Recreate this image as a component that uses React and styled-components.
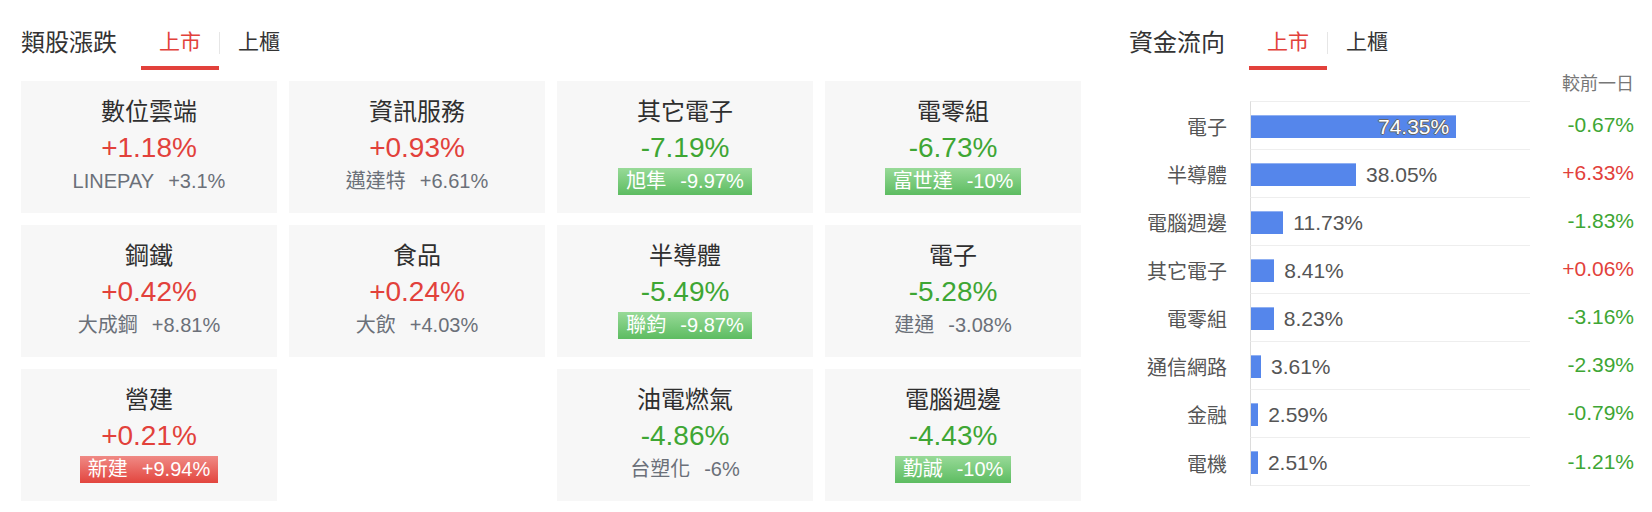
import React from "react";
import styled, { createGlobalStyle } from "styled-components";

const RED = "#e2413b";
const GREEN = "#3ea634";

const GlobalStyle = createGlobalStyle`
  html, body { margin: 0; padding: 0; background: #fff; }
  body {
    font-family: "Liberation Sans", "Noto Sans CJK TC", sans-serif;
    color: #333;
  }
`;

const Page = styled.div`
  display: flex;
  gap: 48px;
  width: 1652px;
  height: 512px;
  box-sizing: border-box;
  padding: 0 18px 0 21px;
`;

const LeftSection = styled.section`
  width: 1060px;
  flex: none;
`;

const RightSection = styled.section`
  flex: 1;
  min-width: 0;
`;

const Header = styled.div`
  display: flex;
  height: 70px;
`;

const Title = styled.h2`
  margin: 31px 24px 0 0;
  font-size: 24px;
  line-height: 24px;
  font-weight: 400;
  color: #333;
  white-space: nowrap;
`;

const Tabs = styled.div`
  display: flex;
`;

const Tab = styled.div`
  box-sizing: border-box;
  width: 78px;
  height: 70px;
  padding-top: 31px;
  text-align: center;
  font-size: 21px;
  line-height: 21px;
  color: ${(p) => (p.$active ? RED : "#333")};
  border-bottom: 4px solid ${(p) => (p.$active ? RED : "transparent")};
  cursor: pointer;
`;

const TabDivider = styled.div`
  width: 1px;
  height: 22px;
  margin-top: 32px;
  background: #e6e6e6;
`;

const CardArea = styled.div`
  display: flex;
  gap: 12px;
  margin-top: 11px;
`;

const CardGroup = styled.div`
  display: grid;
  grid-template-columns: repeat(2, 256px);
  grid-auto-rows: 132px;
  gap: 12px;
`;

const Card = styled.div`
  box-sizing: border-box;
  background: #f7f7f7;
  display: flex;
  flex-direction: column;
  align-items: center;
  padding-top: 19px;
`;

const CardName = styled.div`
  font-size: 24px;
  line-height: 24px;
  color: #2f2f2f;
`;

const CardPct = styled.div`
  margin-top: 7px;
  font-size: 28px;
  line-height: 34px;
  color: ${(p) => (p.$up ? RED : GREEN)};
`;

const CardSub = styled.div`
  margin-top: 3px;
  display: flex;
  gap: 14px;
  height: 27px;
  font-size: 20px;
  line-height: 27px;
  padding: 0 ${(p) => (p.$badge ? "8px" : "0")};
  color: ${(p) => (p.$badge ? "#fff" : "#6b7079")};
  background: ${(p) =>
    !p.$badge
      ? "transparent"
      : p.$up
      ? "linear-gradient(180deg, #f08a85 0%, #e2453e 100%)"
      : "linear-gradient(180deg, #98da98 0%, #5dbc61 100%)"};
`;

const CompareHead = styled.div`
  box-sizing: border-box;
  height: 31px;
  padding-top: 5px;
  text-align: right;
  font-size: 18px;
  line-height: 18px;
  color: #777;
`;

const ChartRow = styled.div`
  display: grid;
  grid-template-columns: 98px 280px 1fr;
  column-gap: 23px;
  align-items: center;
  height: ${(p) => (p.$last ? "49px" : "48px")};
`;

const RowLabel = styled.div`
  text-align: right;
  font-size: 20px;
  line-height: 24px;
  padding-top: 6px;
  color: #555;
  white-space: nowrap;
`;

const Plot = styled.div`
  align-self: stretch;
  box-sizing: border-box;
  display: flex;
  align-items: flex-start;
  padding-top: 13px;
  border-left: 1px solid #dcdcdc;
  border-top: 1px solid #eeeeee;
  border-bottom: ${(p) => (p.$last ? "1px solid #eeeeee" : "none")};
`;

const Bar = styled.div`
  flex: none;
  height: 23px;
  background: #5586eb;
  box-shadow: inset 0 1px 0 rgba(255, 255, 255, 0.35);
  display: flex;
  justify-content: flex-end;
  align-items: center;
`;

const InsideValue = styled.span`
  padding-right: 7px;
  font-size: 21px;
  line-height: 23px;
  color: #fff;
  text-shadow: -1px 0 #666, 1px 0 #666, 0 -1px #666, 0 1px #666;
`;

const BarValue = styled.span`
  margin-left: 10px;
  font-size: 21px;
  line-height: 23px;
  color: #555;
  white-space: nowrap;
`;

const DayChange = styled.div`
  text-align: right;
  font-size: 21px;
  line-height: 24px;
  color: ${(p) => (p.$up ? RED : GREEN)};
`;

const upGroup = [
  { name: "數位雲端", pct: "+1.18%", stock: "LINEPAY", sp: "+3.1%" },
  { name: "資訊服務", pct: "+0.93%", stock: "邁達特", sp: "+6.61%" },
  { name: "鋼鐵", pct: "+0.42%", stock: "大成鋼", sp: "+8.81%" },
  { name: "食品", pct: "+0.24%", stock: "大飲", sp: "+4.03%" },
  { name: "營建", pct: "+0.21%", stock: "新建", sp: "+9.94%", badge: true },
];

const downGroup = [
  { name: "其它電子", pct: "-7.19%", stock: "旭隼", sp: "-9.97%", badge: true },
  { name: "電零組", pct: "-6.73%", stock: "富世達", sp: "-10%", badge: true },
  { name: "半導體", pct: "-5.49%", stock: "聯鈞", sp: "-9.87%", badge: true },
  { name: "電子", pct: "-5.28%", stock: "建通", sp: "-3.08%" },
  { name: "油電燃氣", pct: "-4.86%", stock: "台塑化", sp: "-6%" },
  { name: "電腦週邊", pct: "-4.43%", stock: "勤誠", sp: "-10%", badge: true },
];

const flows = [
  { name: "電子", v: 74.35, d: "-0.67%" },
  { name: "半導體", v: 38.05, d: "+6.33%" },
  { name: "電腦週邊", v: 11.73, d: "-1.83%" },
  { name: "其它電子", v: 8.41, d: "+0.06%" },
  { name: "電零組", v: 8.23, d: "-3.16%" },
  { name: "通信網路", v: 3.61, d: "-2.39%" },
  { name: "金融", v: 2.59, d: "-0.79%" },
  { name: "電機", v: 2.51, d: "-1.21%" },
];

function SectionHeader({ title }) {
  return (
    <Header>
      <Title>{title}</Title>
      <Tabs>
        <Tab $active>上市</Tab>
        <TabDivider />
        <Tab>上櫃</Tab>
      </Tabs>
    </Header>
  );
}

function SectorCard({ item }) {
  const up = item.pct.startsWith("+");
  return (
    <Card>
      <CardName>{item.name}</CardName>
      <CardPct $up={up}>{item.pct}</CardPct>
      <CardSub $badge={item.badge} $up={up}>
        <span>{item.stock}</span>
        <span>{item.sp}</span>
      </CardSub>
    </Card>
  );
}

export default function App() {
  const SCALE = 276;
  return (
    <>
      <GlobalStyle />
      <Page>
        <LeftSection>
          <SectionHeader title="類股漲跌" />
          <CardArea>
            <CardGroup>
              {upGroup.map((it) => (
                <SectorCard key={it.name} item={it} />
              ))}
            </CardGroup>
            <CardGroup>
              {downGroup.map((it) => (
                <SectorCard key={it.name} item={it} />
              ))}
            </CardGroup>
          </CardArea>
        </LeftSection>
        <RightSection>
          <SectionHeader title="資金流向" />
          <CompareHead>較前一日</CompareHead>
          {flows.map((f, i) => {
            const last = i === flows.length - 1;
            const inside = f.v > 50;
            const label = `${f.v.toFixed(2)}%`;
            return (
              <ChartRow key={f.name} $last={last}>
                <RowLabel>{f.name}</RowLabel>
                <Plot $last={last}>
                  <Bar style={{ width: `${(f.v / 100) * SCALE}px` }}>
                    {inside && <InsideValue>{label}</InsideValue>}
                  </Bar>
                  {!inside && <BarValue>{label}</BarValue>}
                </Plot>
                <DayChange $up={f.d.startsWith("+")}>{f.d}</DayChange>
              </ChartRow>
            );
          })}
        </RightSection>
      </Page>
    </>
  );
}
